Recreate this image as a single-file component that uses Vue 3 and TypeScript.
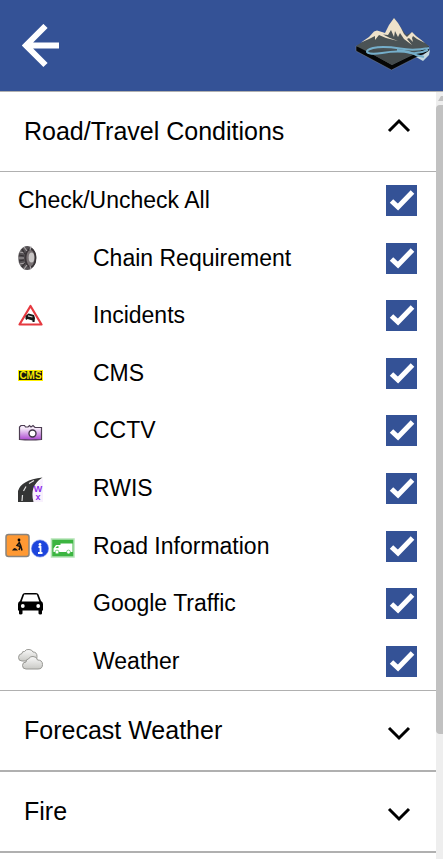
<script setup lang="ts">
import { computed, reactive, ref } from 'vue'

interface Layer {
  id: string
  label: string
  on: boolean
}

const layers = reactive<Layer[]>([
  { id: 'chain', label: 'Chain Requirement', on: true },
  { id: 'incidents', label: 'Incidents', on: true },
  { id: 'cms', label: 'CMS', on: true },
  { id: 'cctv', label: 'CCTV', on: true },
  { id: 'rwis', label: 'RWIS', on: true },
  { id: 'road', label: 'Road Information', on: true },
  { id: 'traffic', label: 'Google Traffic', on: true },
  { id: 'weather', label: 'Weather', on: true },
])

const roadOpen = ref(true)
const sections = ['Forecast Weather', 'Fire']

const allOn = computed({
  get: () => layers.every((l) => l.on),
  set: (v: boolean) => layers.forEach((l) => (l.on = v)),
})
</script>

<template>
  <div class="page">
    <header class="bar">
      <button class="back" type="button" aria-label="Back">
        <svg width="38" height="44" viewBox="0 0 38 44">
          <path d="M37 21.500H6M23.500 2L4 21.500L23.500 41" fill="none" stroke="#fff" stroke-width="6" />
        </svg>
      </button>
      <svg class="logo" width="76" height="60" viewBox="0 0 76 60" aria-hidden="true">
        <path d="M1 30V35L36.500 54L60 42L74 36V30Z" fill="#050606" stroke="#7b8598" stroke-width=".5" />
        <path d="M1 30L12 23L22 15L29 19L39 2L51 19L57 16.500L63 22L74 30L60 38L37 49L15 37Z" fill="#4b5355" />
        <path d="M10 34L37 49L58 38Q38 33 10 34Z" fill="#444b4d" />
        <path d="M6 26.500L14 21L19 15.500L22 14.500L27 16L30 17L34 9L39 2L43 7L46 12L49 18L52 21L54 19L57 16L61 20L65 23L70 27L62 23L58 20L57 22L58 26L54 22L52 23L57 29L49 23L45 17L43 21L40 15L39 21L36 14L33 19L28 18.500L35 22L43 25L31 22L24 19L20 24L20 20L14 23Z" fill="#eee2cb" />
        <path d="M68 39L75 34L74 39L68 45L61 41Z" fill="#c3d7df" />
        <path d="M74 32Q58 35 45 32.500Q28 30 18 32Q11 34 12 36Q15 39 27 37Q44 34 56 37Q64 38 73 34" fill="none" stroke="#75aeca" stroke-width="2" />
        <path d="M42 34Q54 35 61 39L69 41" fill="none" stroke="#75aeca" stroke-width="2" />
      </svg>
    </header>

    <div class="body">
      <main class="panel">
        <section class="group">
          <h2>
            <button class="toggle" type="button" :aria-expanded="roadOpen" @click="roadOpen = !roadOpen">
              <span>Road/Travel Conditions</span>
              <svg class="chev" :class="{ up: roadOpen }" width="24" height="24" viewBox="0 0 24 24">
                <path d="M2 11L12 21L22 11" fill="none" stroke="#000" stroke-width="3" />
              </svg>
            </button>
          </h2>
          <ul v-if="roadOpen" class="rows">
            <li class="row">
              <label class="all" for="all">Check/Uncheck All</label>
              <span class="tick">
                <input id="all" v-model="allOn" type="checkbox" />
                <svg width="31" height="31" viewBox="0 0 31 31"><path d="M5.500 16L12 22L26.500 7" /></svg>
              </span>
            </li>
            <li v-for="l in layers" :key="l.id" class="row">
              <span class="icons" :class="{ wide: l.id === 'road' }">
                <svg v-if="l.id === 'chain'" width="25" height="26" viewBox="0 0 25 26">
                  <ellipse cx="9.200" cy="13" rx="9" ry="12" fill="#565255" />
                  <ellipse cx="12.500" cy="13" rx="5" ry="9" fill="#7a7375" stroke="#3a3538" stroke-width="1.800" />
                  <ellipse cx="13.500" cy="12.500" rx="2.800" ry="5" fill="#c9c6c6" />
                  <path d="M6 2L9 6M1.500 7L7 8M0 13H6M1.500 19L7 18M6 24L9 20M13 1.500L12 5M13 24L12 21" fill="none" stroke="#aaa6a8" stroke-width="1.200" />
                  <path d="M4 4L7 9M1 10L6 11M1 16L6 15M4 22L7 18" fill="none" stroke="#343033" stroke-width="1.200" />
                </svg>
                <svg v-else-if="l.id === 'incidents'" width="25" height="26" viewBox="0 0 25 26">
                  <path d="M12.500 3L23.500 21.500H1.500Z" fill="#fff" stroke="#e63940" stroke-width="2.200" stroke-linejoin="round" />
                  <path d="M7.500 13L10.500 10.500L16 12L17 15L16.500 19H14.500V17.500L9.500 16L8.500 17L7.500 16Z" fill="#151515" />
                  <path d="M10 12.800L14.500 14" stroke="#ccc" stroke-width="1.200" />
                </svg>
                <svg v-else-if="l.id === 'cms'" width="25" height="26" viewBox="0 0 25 26">
                  <rect x=".5" y="10.500" width="24" height="10" fill="#18180d" stroke="#fff000" />
                  <text x="12.500" y="19" text-anchor="middle" font-size="10" font-weight="700" fill="#f4e900">CMS</text>
                </svg>
                <svg v-else-if="l.id === 'cctv'" width="25" height="26" viewBox="0 0 25 26">
                  <defs>
                    <linearGradient id="cam" x1="0" y1="0" x2="0" y2="1">
                      <stop offset=".2" stop-color="#f6eafa" />
                      <stop offset="1" stop-color="#aa45cf" />
                    </linearGradient>
                  </defs>
                  <path d="M1.500 21.500V9L3 7.500H6.500L7.500 9H10L11.500 7.500L13 9L15 7.500L17 9.500H23.500V21.500Q12.500 22.500 1.500 21.500Z" fill="url(#cam)" stroke="#4c3d52" stroke-width="1.200" />
                  <circle cx="14.500" cy="15.500" r="3.500" fill="#fff" stroke="#413647" stroke-width="1.400" />
                </svg>
                <svg v-else-if="l.id === 'rwis'" width="25" height="26" viewBox="0 0 25 26">
                  <path d="M14 26V12L25 2V26Z" fill="#f8f0fd" />
                  <path d="M0 26V15Q3 4 24.500 1.500Q11 10 15.500 26Z" fill="#343535" />
                  <path d="M4 25L4.500 19M5.500 15L8 10.500M11 7.500L16 4.500" stroke="#e2e2e2" stroke-width="1.200" />
                  <text text-anchor="middle" font-size="9" font-weight="700" fill="#8d2bea"><tspan x="20" y="16">W</tspan><tspan x="20" y="24">x</tspan></text>
                </svg>
                <template v-else-if="l.id === 'road'">
                  <svg width="25" height="26" viewBox="0 0 25 26">
                    <rect x="1" y="1.500" width="23" height="22" rx="2.500" fill="#ff9933" stroke="#89847e" stroke-width="1.500" />
                    <circle cx="14" cy="7" r="1.400" />
                    <path d="M7 17.500Q9.500 12.500 13 17.500Z" fill="#181410" />
                    <path d="M14 8.500L15.500 12.500L14 17M15.500 12L17 17.500M14 10L12 12.500L16.500 14" fill="none" stroke="#181410" stroke-width="1.500" />
                  </svg>
                  <svg width="18" height="26" viewBox="0 0 18 26">
                    <circle cx="9" cy="15.500" r="8.600" fill="#1d45dd" stroke="#7d94ea" stroke-width=".6" />
                    <circle cx="9" cy="11.500" r="1.400" fill="#fff" />
                    <path d="M7.500 14H9.500V20M7 20H11.500" fill="none" stroke="#fff" stroke-width="1.800" />
                  </svg>
                  <svg width="25" height="26" viewBox="0 0 25 26">
                    <rect x="1.500" y="6" width="22.500" height="18" fill="#3bb540" stroke="#b5e3b6" stroke-width="1.500" />
                    <path d="M10.500 10.500H22.500V19H3.500V15.500L6 12H10.500Z" fill="#fff" />
                    <circle cx="7" cy="19" r="1.900" fill="#fff" stroke="#3bb540" stroke-width=".6" />
                    <circle cx="18.500" cy="19" r="1.900" fill="#fff" stroke="#3bb540" stroke-width=".6" />
                    <path d="M5.500 15L7 13.200H8.500V15Z" fill="#3bb540" />
                  </svg>
                </template>
                <svg v-else-if="l.id === 'traffic'" width="25" height="26" viewBox="0 0 25 26">
                  <path d="M4.500 3.500Q5 2 7 2H18Q20 2 20.500 3.500L23 10Q25 11 25 13V19.500H24V22.500Q24 23.500 22.500 23.500Q20.500 23.500 20.500 22.500V19.500H4.500V22.500Q4.500 23.500 2.500 23.500Q1 23.500 1 22.500V19.500H0V13Q0 11 2 10Z" fill="#000" />
                  <path d="M6.200 3.500H18.800L21.300 10.500H3.700Z" fill="#fff" />
                  <circle cx="4.800" cy="15" r="1.900" fill="#fff" />
                  <circle cx="20.200" cy="15" r="1.900" fill="#fff" />
                </svg>
                <svg v-else width="25" height="26" viewBox="0 0 25 26">
                  <defs>
                    <linearGradient id="cloud" x1="0" y1="0" x2="0" y2="1">
                      <stop offset="0" stop-color="#fafafa" />
                      <stop offset="1" stop-color="#c9c9c5" />
                    </linearGradient>
                  </defs>
                  <g fill="url(#cloud)" stroke="#989894" stroke-width="1">
                    <path d="M4 13Q.5 13 .5 9.500Q.5 6 4 5.500Q4 3 6.500 3.500Q8 1 11 1.500Q14 1.500 15 4Q19 4 19 8.500Q19 13 15 13Z" />
                    <path d="M8 21Q4.500 21 4.500 17.500Q4.500 14 8 14Q8 11 10.500 11Q12 8 15 8.500Q19 8.500 19.500 12Q24.500 12 24.500 16.500Q24.500 21 20 21Z" />
                  </g>
                </svg>
              </span>
              <label class="name" :for="l.id">{{ l.label }}</label>
              <span class="tick">
                <input :id="l.id" v-model="l.on" type="checkbox" />
                <svg width="31" height="31" viewBox="0 0 31 31"><path d="M5.500 16L12 22L26.500 7" /></svg>
              </span>
            </li>
          </ul>
        </section>

        <section v-for="s in sections" :key="s" class="group closed">
          <h2>
            <button class="toggle" type="button" aria-expanded="false">
              <span>{{ s }}</span>
              <svg class="chev" width="24" height="24" viewBox="0 0 24 24">
                <path d="M2 11L12 21L22 11" fill="none" stroke="#000" stroke-width="3" />
              </svg>
            </button>
          </h2>
        </section>
      </main>

      <div class="scroll" aria-hidden="true">
        <svg width="7" height="13" viewBox="0 0 7 13"><path d="M2 9L5 4H7V9Z" fill="#c1c1c1" /></svg>
        <div class="thumb"></div>
      </div>
    </div>
  </div>
</template>

<style>
body {
  margin: 0;
  background: #fff;
}
</style>

<style scoped>
.page {
  display: flex;
  flex-direction: column;
  min-height: 100vh;
  font-family: "Liberation Sans", Arial, sans-serif;
  color: #000;
}
.bar {
  display: flex;
  align-items: center;
  justify-content: space-between;
  height: 91px;
  padding: 0 12px 0 22px;
  background: #345296;
  border-bottom: 1px solid #b0b0b0;
}
button {
  padding: 0;
  border: 0;
  background: none;
  color: inherit;
  font: inherit;
  cursor: pointer;
}
svg {
  display: block;
  flex: none;
}
.body {
  display: flex;
  flex: 1;
}
.panel {
  flex: 1;
}
h2 {
  margin: 0;
  font-size: 25px;
  font-weight: 400;
}
.toggle {
  display: flex;
  align-items: center;
  justify-content: space-between;
  width: 100%;
  height: 79px;
  padding: 0 25px 0 24px;
  text-align: left;
}
.chev {
  margin-bottom: 4px;
}
.chev.up {
  transform: rotate(180deg);
}
.group {
  border-bottom: 1px solid #b0b0b0;
}
.closed {
  border-bottom-width: 2px;
}
.rows {
  display: grid;
  grid-auto-rows: 1fr;
  min-height: 518px;
  margin: 0;
  padding: 0;
  list-style: none;
  border-top: 1px solid #b0b0b0;
}
.row {
  display: flex;
  align-items: center;
  padding-right: 19px;
  font-size: 23px;
}
.all {
  flex: 1;
  padding-left: 18px;
}
.icons {
  display: flex;
  box-sizing: border-box;
  width: 93px;
  padding-left: 18px;
}
.icons.wide {
  gap: 1px;
  padding-left: 5px;
}
.name {
  flex: 1;
}
.tick {
  display: grid;
}
.tick input,
.tick svg {
  grid-area: 1 / 1;
}
.tick input {
  appearance: none;
  box-sizing: border-box;
  width: 31px;
  height: 31px;
  margin: 0;
  border: 1px solid #345296;
  background: #fff;
  cursor: pointer;
}
.tick input:checked {
  background: #345296;
}
.tick svg {
  pointer-events: none;
}
.tick path {
  fill: none;
  stroke: #fff;
  stroke-width: 5;
}
.scroll {
  display: flex;
  flex-direction: column;
  width: 7px;
  background: #eee;
}
.thumb {
  height: 82%;
  border-radius: 4px 0 0 4px;
  background: #c1c1c1;
}
</style>
